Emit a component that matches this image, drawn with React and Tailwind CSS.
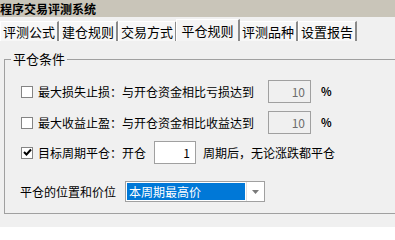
import React from 'react';

const tabs = ['评测公式', '建仓规则', '交易方式', '平仓规则', '评测品种', '设置报告'];

function CheckBox({ checked }) {
  return (
    <span className="w-[12px] h-[12px] shrink-0 border border-[#848484] bg-white flex items-center justify-center">
      {checked && (
        <svg width="9" height="9" viewBox="0 0 9 9">
          <path d="M1 4 L3.5 6.5 L8 1.5" stroke="#000" strokeWidth="2" fill="none" />
        </svg>
      )}
    </span>
  );
}

function NumBox({ value, disabled }) {
  return (
    <div
      className={
        'h-[23px] border border-[#a0a0a0] flex items-center justify-end pr-[5px] ' +
        (disabled ? 'w-[43px] bg-[#f0f0f0] text-[#6d6d6d]' : 'w-[42px] bg-white text-black')
      }
    >
      {value}
    </div>
  );
}

export default function App() {
  return (
    <div className="w-[395px] h-[227px] overflow-hidden bg-[#f0f0f0] text-[12px] text-black font-['Noto_Sans_CJK_SC','Noto_Sans',sans-serif]">
      {/* title bar */}
      <div className="h-[17px] bg-[#c9c5b9] font-bold leading-[17px] whitespace-nowrap">
        程序交易评测系统
      </div>

      {/* tabs */}
      <div className="flex items-end h-[24px]">
        {tabs.map((t, i) => {
          const active = i === 3;
          return (
            <div
              key={t}
              className={
                'flex items-center justify-center whitespace-nowrap border-l border-t border-white border-r-2 border-r-[#8a8a8a] text-[13px] ' +
                (active
                  ? 'h-[22px] w-[64px] bg-[#f4f4f4] -mx-[1px] z-10'
                  : 'h-[20px] w-[59px] bg-[#f7f7f7]')
              }
            >
              {t}
            </div>
          );
        })}
      </div>

      {/* group box */}
      <div className="relative mt-[18px] ml-[4px] w-[400px] h-[155px] border border-[#a0a0a0] pt-[20px]">
        <span className="absolute -top-[9px] left-[6px] px-[2px] bg-[#f0f0f0] leading-[16px] text-[13px]">
          平仓条件
        </span>

        <div className="flex items-center h-[23px] pl-[16px]">
          <CheckBox />
          <span className="ml-[5px] w-[230px] whitespace-nowrap">最大损失止损：与开仓资金相比亏损达到</span>
          <NumBox value="10" disabled />
          <span className="ml-[10px] text-[11px] font-bold">%</span>
        </div>

        <div className="flex items-center h-[23px] pl-[16px] mt-[8px]">
          <CheckBox />
          <span className="ml-[5px] w-[230px] whitespace-nowrap">最大收益止盈：与开仓资金相比收益达到</span>
          <NumBox value="10" disabled />
          <span className="ml-[10px] text-[11px] font-bold">%</span>
        </div>

        <div className="flex items-center h-[23px] pl-[16px] mt-[7px]">
          <CheckBox checked />
          <span className="ml-[5px] w-[116px] whitespace-nowrap">目标周期平仓：开仓</span>
          <NumBox value="1" />
          <span className="ml-[7px] whitespace-nowrap">周期后，无论涨跌都平仓</span>
        </div>

        <div className="flex items-center h-[21px] pl-[15px] mt-[17px]">
          <span className="w-[105px] whitespace-nowrap">平仓的位置和价位</span>
          <div className="w-[140px] h-[21px] border border-[#a0a0a0] bg-white flex">
            <div className="flex-1 m-[1px] bg-[#0078d7] text-white leading-[17px] pl-[2px]">本周期最高价</div>
            <div className="w-[18px] border-l border-[#e0e0e0] flex items-center justify-center">
              <svg width="7" height="4" viewBox="0 0 7 4">
                <path d="M0 0 H7 L3.5 4 Z" fill="#7a7a7a" />
              </svg>
            </div>
          </div>
        </div>
      </div>
    </div>
  );
}
